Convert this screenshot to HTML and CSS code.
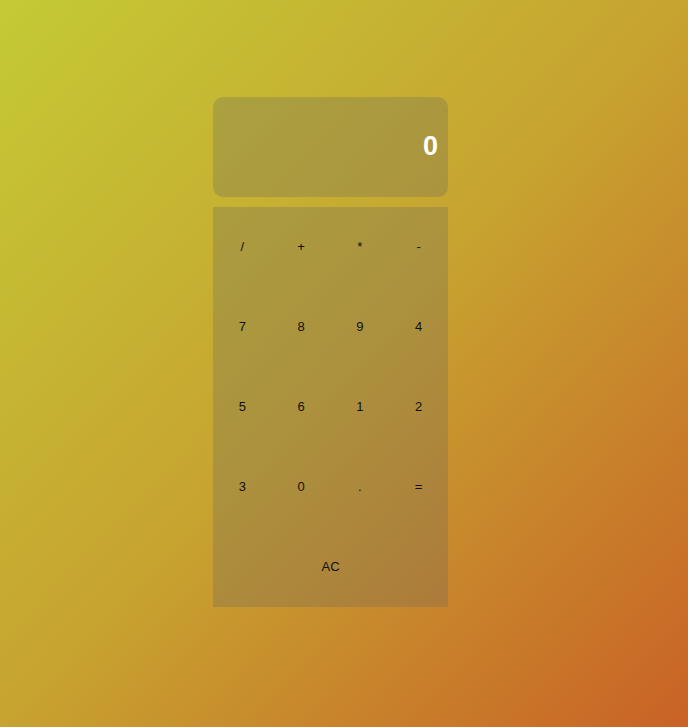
FILE: index.html
```html
<!DOCTYPE html>
<html>
<head>
<meta charset="utf-8">
<link rel="stylesheet" href="styles.css">
</head>
<body>
<div class="calc">
  <div class="display"><span class="value">0</span></div>
  <div class="keys">
    <button class="key">/</button>
    <button class="key">+</button>
    <button class="key">*</button>
    <button class="key">-</button>
    <button class="key">7</button>
    <button class="key">8</button>
    <button class="key">9</button>
    <button class="key">4</button>
    <button class="key">5</button>
    <button class="key">6</button>
    <button class="key">1</button>
    <button class="key">2</button>
    <button class="key">3</button>
    <button class="key">0</button>
    <button class="key">.</button>
    <button class="key">=</button>
    <button class="key wide">AC</button>
  </div>
</div>
</body>
</html>
```
FILE: styles.css
```css
html, body {
  margin: 0;
  height: 100%;
}
body {
  background: linear-gradient(to bottom right, #c4ca35, #c7a330 50%, #c96226);
  font-family: "Liberation Sans", Arial, sans-serif;
  padding: 97px 0 0 213px;
  box-sizing: border-box;
}
.calc {
  width: 235px;
  display: flex;
  flex-direction: column;
  gap: 10px;
}
.display {
  height: 100px;
  border-radius: 10px;
  background: rgba(100, 100, 100, 0.27);
  display: flex;
  align-items: center;
  justify-content: flex-end;
  padding: 0 10px 2px 0;
  box-sizing: border-box;
}
.value {
  color: #fff;
  font-weight: bold;
  font-size: 27px;
}
.keys {
  display: grid;
  grid-template-columns: repeat(4, 1fr);
  grid-auto-rows: 80px;
  background: rgba(100, 100, 100, 0.27);
}
.key {
  border: none;
  background: transparent;
  font-family: "Liberation Sans", Arial, sans-serif;
  font-size: 13px;
  color: #111;
  padding: 0 0 2px 0;
}
.wide {
  grid-column: 1 / -1;
}
```
